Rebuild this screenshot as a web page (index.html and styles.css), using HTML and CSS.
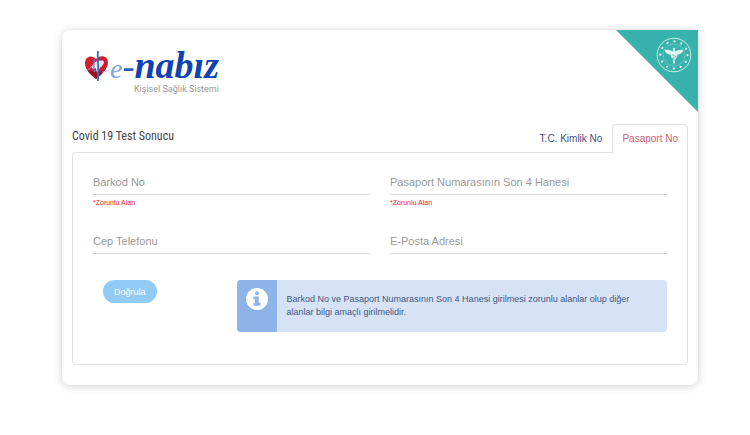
FILE: index.html
```html
<!DOCTYPE html>
<html lang="tr">
<head>
<meta charset="utf-8">
<meta name="viewport" content="width=device-width, initial-scale=1">
<title>e-Nabız</title>
<link rel="stylesheet" href="styles.css">
</head>
<body>
<main class="card">
  <div class="corner">
    <svg class="emblem" viewBox="0 0 36 36" aria-hidden="true">
      <circle cx="18" cy="18" r="16.8" fill="none" stroke="#cdebe8" stroke-width="1"/>
      <circle cx="18" cy="18" r="13.6" fill="none" stroke="#e6f6f5" stroke-width="2.2" stroke-linecap="round" stroke-dasharray="0.1 7.02"/>
      <circle cx="18" cy="18" r="11" fill="none" stroke="#83cfca" stroke-width=".6"/>
      <path d="M8.500 13c3-.8 6 0 8.500 1.600V12.500a1.200 1.200 0 1 1 2 0v2.100c2.500-1.600 5.500-2.400 8.500-1.600-.8 2.800-3 4.400-6 4.600l-1 3.400L19 22v4.500h-2V22l-1.500-1-1-3.400C11.500 17.400 9.300 15.800 8.500 13z" fill="#e0f4f2"/>
      <path d="M16 17.500l4 2-3.500 2 3 2" fill="none" stroke="#38b2ac" stroke-width=".6"/>
    </svg>
  </div>

  <header class="brand">
    <svg class="brand-mark" viewBox="0 0 26 32" aria-hidden="true">
      <path d="M12 29C7 25 1 20 1 13.500 1 6 8 4.500 12 9c4-4.500 12-3.500 12 3.500 0 6.500-7 12.500-12 16.500z" fill="#cf1f2c"/>
      <path d="M2 17C4 23 9 26 12 29c4-3 8-7 10-11-4 4-8 5-11 4-3-1-6-2-9-5z" fill="#9c1422"/>
      <path d="M8 18c0-4.500 4-8 10-7.500 3 .5 2 4-.5 6C15 18 14.500 20 14 23c-1.500-1.500-2-3-2-5-1.500 1-2.500 1.200-4 0z" fill="#f3e9f2"/>
      <path d="M14 1c-1 8 1 12 0 30" fill="none" stroke="#2f6fd0" stroke-width="1.800"/>
      <path d="M10.500 9c-1 4-1 8 0 13" fill="none" stroke="#5b7fd0" stroke-width="1.200"/>
      <path d="M0 21c4 0 6-2 8-5M18 22c3 0 6-1 8-3" fill="none" stroke="#a9c0ee" stroke-width=".8"/>
    </svg>
    <div class="brand-text">
      <div class="brand-name"><span class="brand-e">e</span><span class="brand-dash">-</span><span class="brand-word">nabız</span></div>
      <div class="brand-sub">Kişisel Sağlık Sistemi</div>
    </div>
  </header>

  <div class="heading-row">
    <h1 class="title">Covid 19 Test Sonucu</h1>
    <nav class="tabs">
      <a class="tab" href="#tc">T.C. Kimlik No</a>
      <a class="tab tab-active" href="#pasaport">Pasaport No</a>
    </nav>
  </div>

  <form class="panel" id="pasaport">
    <div class="fields">
      <div class="field">
        <input class="field-input" type="text" id="barkod" required>
        <label class="field-label" for="barkod">Barkod No</label>
        <span class="field-note">*Zorunlu Alan</span>
      </div>
      <div class="field">
        <input class="field-input" type="text" id="pasaport-no" required>
        <label class="field-label" for="pasaport-no">Pasaport Numarasının Son 4 Hanesi</label>
        <span class="field-note">*Zorunlu Alan</span>
      </div>
      <div class="field">
        <input class="field-input" type="tel" id="telefon">
        <label class="field-label" for="telefon">Cep Telefonu</label>
      </div>
      <div class="field">
        <input class="field-input" type="email" id="eposta">
        <label class="field-label" for="eposta">E-Posta Adresi</label>
      </div>
    </div>
    <div class="actions">
      <button class="submit" type="submit">Doğrula</button>
      <div class="info">
        <div class="info-side">
          <svg class="info-icon" viewBox="0 0 22 22" aria-hidden="true">
            <circle cx="11" cy="11" r="11" fill="#fff"/>
            <circle cx="11" cy="5.200" r="2" fill="#8db3e8"/>
            <path d="M7.500 8.500h5.300v6.500H14.500v2.700h-7V15H9v-3.800H7.500z" fill="#8db3e8"/>
          </svg>
        </div>
        <p class="info-text">Barkod No ve Pasaport Numarasının Son 4 Hanesi girilmesi zorunlu alanlar olup diğer alanlar bilgi amaçlı girilmelidir.</p>
      </div>
    </div>
  </form>
</main>
</body>
</html>
```
FILE: styles.css
```css
* {
  box-sizing: border-box;
}

body {
  margin: 0;
  padding: 30px 52px 50px 62px;
  background: #fff;
  color: #333;
  font-family: "Liberation Sans", Arial, sans-serif;
}

.card {
  position: relative;
  padding: 20px 10px;
  border-radius: 8px;
  background: #fff;
  box-shadow: 0 1px 8px rgba(0, 0, 0, 0.2);
}

.corner {
  position: absolute;
  top: 0;
  right: 0;
  width: 82px;
  height: 82px;
  padding: 7px 6px;
  background: #38b2ac;
  clip-path: polygon(0 0, 100% 0, 100% 100%);
}

.emblem {
  display: block;
  width: 36px;
  height: 36px;
  margin-left: auto;
}

.brand {
  display: flex;
  align-items: flex-start;
  height: 74px;
  padding-left: 12px;
}

.brand-mark {
  width: 26px;
  height: 32px;
}

.brand-name {
  display: flex;
  align-items: baseline;
  font-family: "Liberation Serif", "Times New Roman", serif;
  font-style: italic;
  line-height: 30px;
}

.brand-e {
  color: #7fa2e0;
  font-size: 28px;
}

.brand-dash {
  color: #2b5fc4;
  font-size: 36px;
}

.brand-word {
  color: #0f43b0;
  font-size: 38px;
  font-weight: bold;
}

.brand-sub {
  color: #999;
  font-family: Roboto, sans-serif;
  font-size: 9px;
  line-height: 10px;
  text-align: right;
}

.heading-row {
  display: flex;
  justify-content: space-between;
  align-items: flex-start;
}

.title {
  margin: 0;
  color: #444;
  font-family: "Roboto Condensed", "Liberation Sans Narrow", Roboto, sans-serif;
  font-size: 12px;
  font-weight: normal;
  line-height: 24px;
}

.tabs {
  display: flex;
}

.tab {
  padding: 0 9px;
  border: 1px solid transparent;
  border-bottom: 0;
  border-radius: 4px 4px 0 0;
  color: #46507a;
  font-size: 10px;
  line-height: 28px;
  text-decoration: none;
}

.tab-active {
  position: relative;
  border-color: #dee2e6;
  background: #fff;
  color: #d0606a;
}

.panel {
  margin-top: -1px;
  padding: 20px 20px 32px;
  border: 1px solid #dee2e6;
  border-radius: 4px;
  border-top-right-radius: 0;
}

.fields {
  display: grid;
  grid-template-columns: 1fr 1fr;
  column-gap: 20px;
}

.field {
  display: grid;
  grid-template-rows: 22px auto;
  align-content: start;
  height: 59px;
}

.field-input,
.field-label {
  grid-area: 1 / 1;
  font-size: 11px;
}

.field-input {
  width: 100%;
  padding: 0;
  border: 0;
  border-bottom: 1px solid #d3d6da;
  background: transparent;
  outline: 0;
}

.field-label {
  color: #999;
  line-height: 18px;
  pointer-events: none;
}

.field-note {
  color: #f22;
  font-size: 7px;
  line-height: 16px;
}

.actions {
  display: flex;
  align-items: flex-start;
  gap: 80px;
  margin-top: -11px;
  padding: 0 0 0 10px;
}

.submit {
  height: 23px;
  padding: 0 11px;
  border: 0;
  border-radius: 12px;
  background: #90caf5;
  color: #fff;
  font-family: inherit;
  font-size: 9px;
}

.info {
  display: flex;
  flex: 1;
  min-height: 52px;
  border-radius: 4px;
  overflow: hidden;
  background: #d6e3f7;
}

.info-side {
  width: 40px;
  padding: 8px 9px;
  background: #8db3e8;
}

.info-icon {
  display: block;
  width: 22px;
  height: 22px;
}

.info-text {
  flex: 1;
  align-self: center;
  margin: 0;
  padding: 0 20px 0 10px;
  color: #41567e;
  font-size: 9px;
  line-height: 13px;
}
```
